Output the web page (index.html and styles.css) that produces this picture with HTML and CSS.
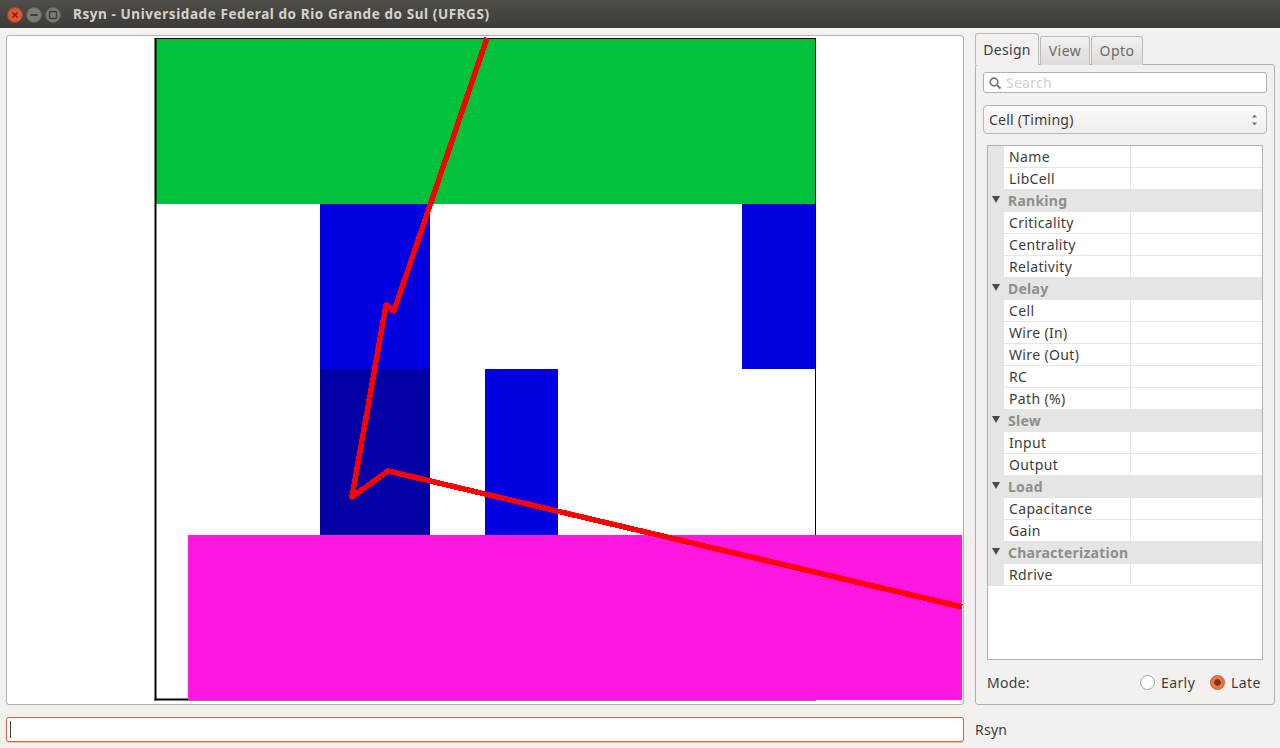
FILE: index.html
```html
<!DOCTYPE html>
<html lang="en">
<head>
    <meta charset="UTF-8">
    <title>Rsyn - Universidade Federal do Rio Grande do Sul (UFRGS)</title>
    <link rel="stylesheet" href="styles.css">
</head>
<body>
    <div class="titlebar">
        <svg class="win-buttons" width="62" height="28" viewBox="0 0 62 28">
            <circle cx="15" cy="15" r="7.5" fill="#e2562b" stroke="#8f4a30"/>
            <path d="M12.5 12.5l5 5M17.5 12.5l-5 5" stroke="#5a2412" stroke-width="1.4"/>
            <circle cx="34" cy="15" r="7.5" fill="#7d7b73" stroke="#5f5d57"/>
            <path d="M30.5 15h7" stroke="#3c3b37" stroke-width="2"/>
            <circle cx="53" cy="15" r="7.5" fill="#7d7b73" stroke="#5f5d57"/>
            <rect x="49.5" y="11.5" width="7" height="7" rx="1" fill="none" stroke="#3c3b37" stroke-width="1.4"/>
        </svg>
        <span class="title">Rsyn - Universidade Federal do Rio Grande do Sul (UFRGS)</span>
    </div>

    <div class="main">
        <div class="canvas-panel">
            <svg class="canvas" width="956" height="668" viewBox="7 36 956 668">
                <rect x="155" y="39" width="660" height="165" fill="#00c13b"/>
                <rect x="154.5" y="38" width="661.5" height="1" fill="#000"/>
                <rect x="815" y="38" width="1" height="662" fill="#000"/>
                <rect x="154.5" y="38" width="2" height="662.5" fill="#000"/>
                <rect x="154.5" y="698.5" width="661.5" height="2" fill="#000"/>
                <rect x="320" y="204" width="110" height="165" fill="#0000e1"/>
                <rect x="320" y="369" width="110" height="166" fill="#0000a5"/>
                <rect x="485" y="369" width="73" height="166" fill="#0000e1"/>
                <rect x="742" y="204" width="73" height="165" fill="#0000e1"/>
                <rect x="188" y="535" width="774" height="165" fill="#ff17e1"/>
                <polyline class="wire" points="487,38 394,311 386,305 352,497 388,471 962,607"/>
            </svg>
        </div>

        <div class="side">
            <div class="tabs">
                <div class="tab active">Design</div>
                <div class="tab view">View</div>
                <div class="tab opto">Opto</div>
            </div>
            <div class="pane">
                <div class="search">
                    <svg width="14" height="14" viewBox="0 0 14 14">
                        <circle cx="6" cy="6" r="3.8" fill="none" stroke="#77756f" stroke-width="1.7"/>
                        <path d="M9 9l3.5 3.5" stroke="#77756f" stroke-width="2"/>
                    </svg>
                    <span>Search</span>
                </div>
                <div class="combo">
                    <span>Cell (Timing)</span>
                    <svg width="7" height="14" viewBox="0 0 7 14">
                        <path d="M3.5 1.5l2.5 3H1zM3.5 12.5l2.5-3H1z" fill="#77756f"/>
                    </svg>
                </div>
                <div class="tree">
                    <div class="row"><span class="name">Name</span><span class="value"></span></div>
                    <div class="row"><span class="name">LibCell</span><span class="value"></span></div>
                    <div class="group">Ranking</div>
                    <div class="row"><span class="name">Criticality</span><span class="value"></span></div>
                    <div class="row"><span class="name">Centrality</span><span class="value"></span></div>
                    <div class="row"><span class="name">Relativity</span><span class="value"></span></div>
                    <div class="group">Delay</div>
                    <div class="row"><span class="name">Cell</span><span class="value"></span></div>
                    <div class="row"><span class="name">Wire (In)</span><span class="value"></span></div>
                    <div class="row"><span class="name">Wire (Out)</span><span class="value"></span></div>
                    <div class="row"><span class="name">RC</span><span class="value"></span></div>
                    <div class="row"><span class="name">Path (%)</span><span class="value"></span></div>
                    <div class="group">Slew</div>
                    <div class="row"><span class="name">Input</span><span class="value"></span></div>
                    <div class="row"><span class="name">Output</span><span class="value"></span></div>
                    <div class="group">Load</div>
                    <div class="row"><span class="name">Capacitance</span><span class="value"></span></div>
                    <div class="row"><span class="name">Gain</span><span class="value"></span></div>
                    <div class="group">Characterization</div>
                    <div class="row"><span class="name">Rdrive</span><span class="value"></span></div>
                </div>
                <div class="mode">
                    <span class="mode-label">Mode:</span>
                    <span class="radio"></span><span class="radio-text">Early</span>
                    <span class="radio checked"></span><span class="radio-text">Late</span>
                </div>
            </div>
        </div>
    </div>

    <div class="bottom">
        <div class="command"><span class="caret"></span></div>
        <span class="status">Rsyn</span>
    </div>
</body>
</html>
```

FILE: styles.css
```css
* {
    margin: 0;
    padding: 0;
    box-sizing: border-box;
}

body {
    width: 1280px;
    height: 748px;
    overflow: hidden;
    background: #f2f1f0;
    color: #3c3c3c;
    font-family: "Noto Sans", sans-serif;
    font-size: 14px;
    letter-spacing: 0.25px;
    display: flex;
    flex-direction: column;
}

/* Window title bar */
.titlebar {
    height: 28px;
    display: flex;
    align-items: center;
    background: linear-gradient(#504e49, #3c3b37);
}

.win-buttons {
    flex: none;
}

.title {
    margin-left: 11px;
    color: #d6d3cc;
    font-size: 13.5px;
    font-weight: 700;
    letter-spacing: 0.58px;
}

.main {
    display: flex;
    gap: 11px;
    padding: 5px 5px 0 6px;
    height: 677px;
}

/* Drawing area */
.canvas-panel {
    width: 958px;
    height: 670px;
    margin-top: 2px;
    background: #fff;
    border: 1px solid #b3b1ac;
    border-radius: 3px;
    overflow: hidden;
}

.canvas {
    display: block;
}

.wire {
    fill: none;
    stroke: #f00;
    stroke-width: 5.5;
    stroke-linejoin: round;
    shape-rendering: crispEdges;
}

/* Right side panel */
.side {
    width: 300px;
    display: flex;
    flex-direction: column;
}

.tabs {
    display: flex;
    align-items: flex-end;
    gap: 1px;
    height: 32px;
    position: relative;
    z-index: 1;
    margin-bottom: -1px;
}

.tab {
    height: 29px;
    padding-top: 4px;
    text-align: center;
    background: linear-gradient(#f2f1f0, #dddbd8);
    border: 1px solid #bdbbb6;
    border-bottom: none;
    border-radius: 3px 3px 0 0;
    color: #6a6a66;
    letter-spacing: 0.5px;
}

.tab.active {
    width: 64px;
    height: 32px;
    padding-top: 6px;
    background: #f2f1f0;
    color: #3c3c3c;
    letter-spacing: 0.3px;
}

.tab.view {
    width: 50px;
}

.tab.opto {
    width: 52px;
}

.pane {
    flex: 1;
    border: 1px solid #b3b1ac;
    border-radius: 3px;
    padding: 7px 7px 0;
    display: flex;
    flex-direction: column;
}

.search {
    height: 21px;
    display: flex;
    align-items: center;
    gap: 4px;
    padding-left: 4px;
    background: #fff;
    border: 1px solid #b3b1ac;
    border-radius: 3px;
    color: #d0cfcc;
}

.combo {
    height: 29px;
    margin-top: 12px;
    display: flex;
    align-items: center;
    justify-content: space-between;
    padding: 0 8px 0 5px;
    background: linear-gradient(#fbfbfa, #eeedeb);
    border: 1px solid #b9b7b2;
    border-radius: 4px;
}

/* Property tree */
.tree {
    height: 515px;
    margin: 11px 4px 0;
    background: #fff;
    border: 1px solid #b3b1ac;
}

.row {
    height: 22px;
    display: flex;
    padding-left: 16px;
    background: linear-gradient(90deg, #e5e5e4 16px, #fff 16px);
}

.name {
    width: 127px;
    padding-left: 5px;
    line-height: 21px;
    letter-spacing: 0.35px;
    border-bottom: 1px solid #e5e5e4;
    border-right: 1px solid #e5e5e4;
}

.value {
    flex: 1;
    border-bottom: 1px solid #e5e5e4;
}

.group {
    height: 22px;
    position: relative;
    padding-left: 20px;
    line-height: 22px;
    background: #e5e5e4;
    color: #8e8e8c;
    font-weight: 700;
}

.group::before {
    content: "";
    position: absolute;
    left: 4px;
    top: 6px;
    border-left: 4px solid transparent;
    border-right: 4px solid transparent;
    border-top: 7px solid #4a4a48;
}

/* Early / late selector */
.mode {
    display: flex;
    align-items: center;
    height: 44px;
    padding-left: 4px;
}

.mode-label {
    flex: 1;
}

.radio {
    width: 15px;
    height: 15px;
    border: 1px solid #a8a6a1;
    border-radius: 50%;
    background: #fff;
}

.radio.checked {
    border-color: #c9552a;
    background: radial-gradient(circle, #7c3318 3px, #ec7245 3.5px);
}

.radio-text {
    width: 35px;
    margin: 0 14px 0 6px;
    letter-spacing: 0.4px;
}

.radio-text:last-child {
    width: 31px;
    margin-right: 5px;
}

/* Command line */
.bottom {
    display: flex;
    align-items: center;
    gap: 11px;
    padding: 12px 5px 0 6px;
}

.command {
    width: 958px;
    height: 25px;
    display: flex;
    align-items: center;
    padding-left: 3px;
    background: #fff;
    border: 1px solid #d9643a;
    border-radius: 3px;
    box-shadow: 0 1px 0 #f5c4b0;
}

.caret {
    width: 1px;
    height: 17px;
    background: #3c3c3c;
}
```
